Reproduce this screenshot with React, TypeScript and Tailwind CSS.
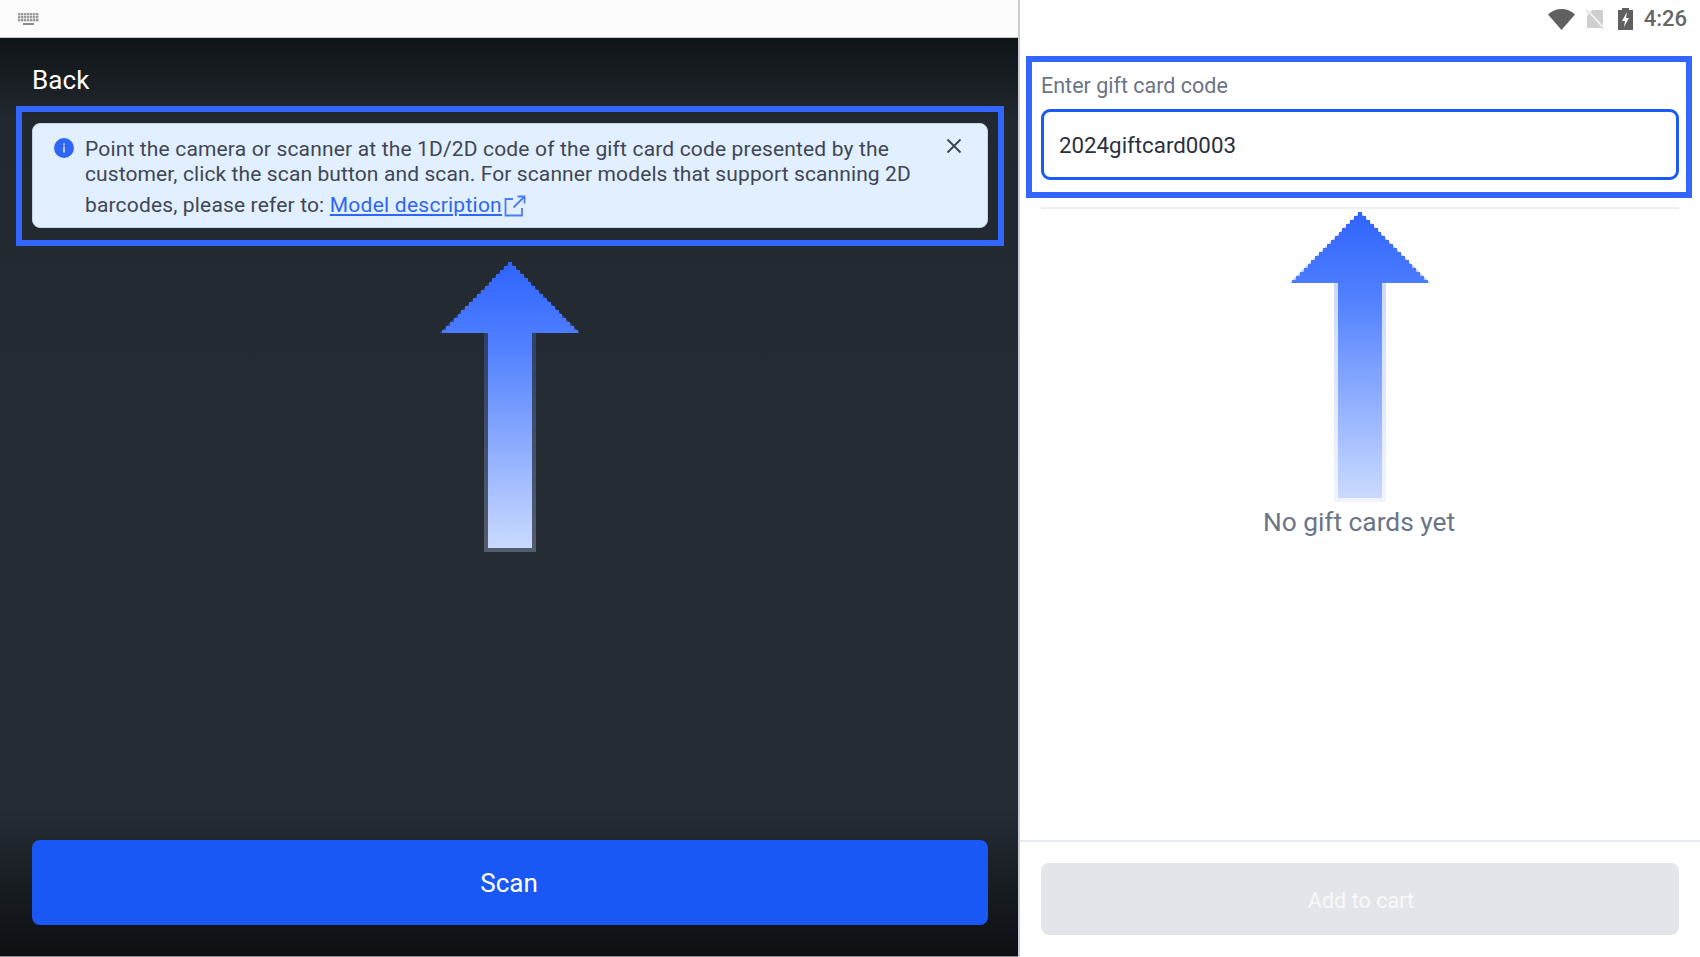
import React from "react";

function Arrow({ id, className }: { id: string; className: string }) {
  const pts: string[] = [];
  const rows = 18;
  const left: string[] = [];
  const right: string[] = [];
  for (let i = 0; i < rows; i++) {
    const hw = Math.round(2 + (i * 66) / (rows - 1));
    const y0 = i * 4;
    const y1 = i === rows - 1 ? 71 : (i + 1) * 4;
    right.push(`${70 + hw},${y0}`, `${70 + hw},${y1}`);
    left.unshift(`${70 - hw},${y1}`, `${70 - hw},${y0}`);
  }
  pts.push(...right, ...left);
  return (
    <svg width="140" height="290" viewBox="0 0 140 290" className={className}>
      <defs>
        <linearGradient id={id} gradientUnits="userSpaceOnUse" x1="0" y1="0" x2="0" y2="290">
          <stop offset="0" stopColor="#2f63ff" />
          <stop offset="0.3" stopColor="#5281ff" />
          <stop offset="1" stopColor="#cddcff" />
        </linearGradient>
      </defs>
      <rect x="44" y="71" width="52" height="219" fill={`url(#${id})`} opacity="0.28" />
      <rect x="48" y="71" width="44" height="215" fill={`url(#${id})`} />
      <polygon points="70,0 140,71 0,71" fill={`url(#${id})`} opacity="0.45" />
      <polygon points={pts.join(" ")} fill={`url(#${id})`} shapeRendering="crispEdges" />
    </svg>
  );
}

function KeyboardIcon() {
  const keys: React.ReactNode[] = [];
  for (let r = 0; r < 3; r++) {
    for (let c = 0; c < 7; c++) {
      keys.push(<rect key={`${r}-${c}`} x={c * 3} y={r * 3} width="2.4" height="2.4" fill="#9a9a9a" />);
    }
  }
  return (
    <svg width="21" height="12" viewBox="0 0 21 12">
      {keys}
      <rect x="5" y="10" width="11" height="2" fill="#8a8a8a" />
    </svg>
  );
}

export default function App() {
  return (
    <div className="relative flex h-[957px] w-[1700px] overflow-hidden bg-white font-['Roboto',sans-serif]">
      {/* Left side */}
      <div className="flex w-[1020px] shrink-0 flex-col border-r-2 border-[#c9cdd8]">
        <div className="flex h-[38px] shrink-0 items-center border-b border-[#c4c4c4] bg-[#fcfcfc] pl-[18px]">
          <KeyboardIcon />
        </div>
        <div className="flex flex-1 flex-col border-b border-[#8a8d92] bg-[linear-gradient(to_bottom,#0f1316_0%,#21282f_9%,#252c34_50%,#252c34_84%,#0c0f12_100%)] pb-[31px] pl-8 pr-[30px]">
          <div className="flex h-[85px] shrink-0 items-center pb-[2px]">
            <span className="text-[26px] leading-none tracking-[0.1px] text-white">Back</span>
          </div>
          <div className="relative h-[105px] shrink-0 rounded-lg border border-[#c4d2e8] bg-[#e2efff] pl-[52px] pt-[13px] text-[21px] leading-[25px] tracking-[0.16px] text-[#3f4655]">
            <svg width="20" height="20" viewBox="0 0 20 20" className="absolute left-[21px] top-[14px]">
              <circle cx="10" cy="10" r="10" fill="#2f66f6" />
              <rect x="9.2" y="8.5" width="1.6" height="6" fill="#dbe6ff" />
              <rect x="9.2" y="5.5" width="1.6" height="1.7" fill="#dbe6ff" />
            </svg>
            <svg width="16" height="16" viewBox="0 0 16 16" className="absolute left-[913px] top-[14px]" fill="none" stroke="#3a4150" strokeWidth="1.8">
              <path d="M1.5 1.5 14.5 14.500M14.500 1.500 1.500 14.500" />
            </svg>
            <div className="whitespace-nowrap">Point the camera or scanner at the 1D/2D code of the gift card code presented by the</div>
            <div className="whitespace-nowrap tracking-[0.11px]">customer, click the scan button and scan. For scanner models that support scanning 2D</div>
            <div className="flex items-center whitespace-nowrap pt-[6px]">
              <span>barcodes, please refer to:&nbsp;</span>
              <span className="tracking-[0.25px] text-[#2f66f6] underline">Model description</span>
              <svg width="22" height="22" viewBox="0 0 22 22" className="ml-[2px]" fill="none" stroke="#4a7cf8" strokeWidth="1.8">
                <path d="M9 4H1.500V20.500H18V13" />
                <path d="M9.500 12.500 20 2M13.500 1.500H20.500V8.500" />
              </svg>
            </div>
          </div>
          <div className="flex-1" />
          <button className="flex h-[85px] shrink-0 items-center justify-center rounded-lg bg-[#1a58f5] pr-[2px] pt-px text-[26px] text-white">Scan</button>
        </div>
      </div>

      {/* Right side */}
      <div className="flex flex-1 flex-col bg-white">
        <div className="flex h-[38px] shrink-0 items-center justify-end pr-[13px] text-[22px] font-medium text-[#666666]">
          <svg width="27" height="21" viewBox="0 0 27 21" className="mr-[11px]">
            <path d="M0 5.500C3.500 2 8.200 0 13.500 0S23.500 2 27 5.500L13.500 21Z" fill="#606060" />
          </svg>
          <svg width="19" height="21" viewBox="0 0 19 21" className="mr-[13px]">
            <path d="M6 1H17V19H1V7Z" fill="#cfcfcf" />
            <path d="M0 0 19 20.500" stroke="#f4f4f4" strokeWidth="2" />
            <path d="M0 1.500 17 20" stroke="#cfcfcf" strokeWidth="1" />
          </svg>
          <svg width="15" height="22" viewBox="0 0 15 22" className="mr-[11px]">
            <path d="M4 0H11V2H15V22H0V2H4Z" fill="#606060" />
            <path d="M9 4 4 13H7L6 19 11 10H8Z" fill="#fff" />
          </svg>
          <span className="leading-none">4:26</span>
        </div>
        <div className="flex flex-1 flex-col px-[21px]">
          <div className="mt-[36px] text-[21.5px] leading-6 text-[#6b7487]">Enter gift card code</div>
          <div className="mt-[11px] flex h-[71px] shrink-0 items-center rounded-[9px] border-[3px] border-[#1a5af5] pl-[15px] pt-[3px] text-[22.3px] text-[#2b3040]">2024giftcard0003</div>
          <div className="mt-[27px] h-[2px] shrink-0 bg-[#eeeff2]" />
          <div className="mt-[297px] pr-[2px] text-center text-[26.300px] leading-8 text-[#6b7487]">No gift cards yet</div>
        </div>
        <div className="shrink-0 border-t-2 border-[#e6e9f0] px-[21px] pb-[22px] pt-[21px]">
          <button className="flex h-[72px] w-full items-center justify-center rounded-lg bg-[#e4e5ea] pl-[2px] pt-[5px] text-[21.6px] text-[#f8f8fa]">Add to cart</button>
        </div>
      </div>

      {/* Annotation overlays */}
      <div className="pointer-events-none absolute left-[16px] top-[106px] h-[140px] w-[988px] border-[6px] border-[#3366ff]" />
      <div className="pointer-events-none absolute left-[1026px] top-[56px] h-[142px] w-[666px] border-[6px] border-[#3366ff]" />
      <Arrow id="arrowLeft" className="pointer-events-none absolute left-[440px] top-[262px]" />
      <Arrow id="arrowRight" className="pointer-events-none absolute left-[1290px] top-[212px]" />
    </div>
  );
}
